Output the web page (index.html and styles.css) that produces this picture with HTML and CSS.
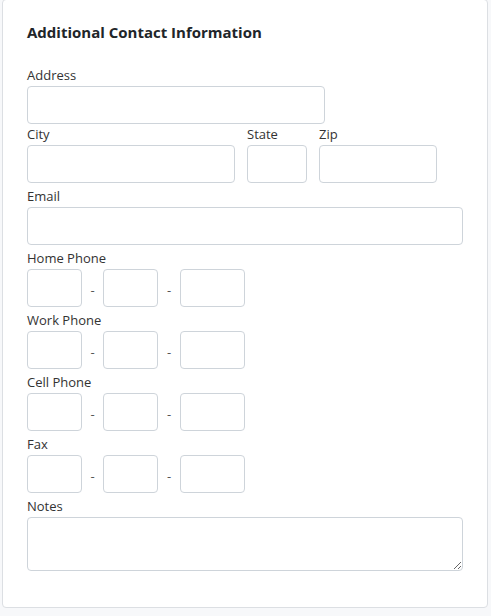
FILE: index.html
```html
<!DOCTYPE html>
<html lang="en">
<head>
<meta charset="utf-8">
<title>Additional Contact Information</title>
<link rel="stylesheet" href="styles.css">
</head>
<body>
<div class="card">
  <h2 class="card-title">Additional Contact Information</h2>
  <div class="group group-first">
    <label class="lbl">Address</label>
    <input class="field w-address" type="text">
  </div>
  <div class="row-csz">
    <div class="group">
      <label class="lbl">City</label>
      <input class="field" type="text">
    </div>
    <div class="group">
      <label class="lbl">State</label>
      <input class="field" type="text">
    </div>
    <div class="group">
      <label class="lbl">Zip</label>
      <input class="field" type="text">
    </div>
  </div>
  <div class="group">
    <label class="lbl">Email</label>
    <input class="field" type="text">
  </div>
  <div class="group">
    <label class="lbl">Home Phone</label>
    <div class="phone">
      <input class="field p3" type="text"><span class="dash">-</span><input class="field p3" type="text"><span class="dash dash-b">-</span><input class="field p4" type="text">
    </div>
  </div>
  <div class="group">
    <label class="lbl">Work Phone</label>
    <div class="phone">
      <input class="field p3" type="text"><span class="dash">-</span><input class="field p3" type="text"><span class="dash dash-b">-</span><input class="field p4" type="text">
    </div>
  </div>
  <div class="group">
    <label class="lbl">Cell Phone</label>
    <div class="phone">
      <input class="field p3" type="text"><span class="dash">-</span><input class="field p3" type="text"><span class="dash dash-b">-</span><input class="field p4" type="text">
    </div>
  </div>
  <div class="group">
    <label class="lbl">Fax</label>
    <div class="phone">
      <input class="field p3" type="text"><span class="dash">-</span><input class="field p3" type="text"><span class="dash dash-b">-</span><input class="field p4" type="text">
    </div>
  </div>
  <div class="group">
    <label class="lbl">Notes</label>
    <textarea class="field notes"></textarea>
  </div>
</div>
</body>
</html>
```
FILE: styles.css
```css
html, body {
  margin: 0;
  padding: 0;
  background: #f7f8fa;
}
body {
  font-family: "Open Sans", "Noto Sans", sans-serif;
  color: #333;
  height: 616px;
  overflow: hidden;
}
.card {
  box-sizing: border-box;
  margin: -1px 0 0 2px;
  width: 486px;
  background: #fff;
  border: 1px solid #dcdfe3;
  border-radius: 4px;
  padding: 22px 24px 36px 24px;
}
.card-title {
  margin: 0 0 23px 0;
  font-size: 15px;
  line-height: 20px;
  font-weight: 700;
  color: #212529;
}
.group {
  display: flex;
  flex-direction: column;
  margin-top: 3px;
}
.group-first {
  margin-top: 0;
}
.lbl {
  display: block;
  font-size: 13px;
  line-height: 21px;
  color: #333;
}
.field {
  box-sizing: border-box;
  height: 38px;
  border: 1px solid #ced4da;
  border-radius: 4px;
  background: #fff;
  margin: 0;
  padding: 6px 10px;
  font: inherit;
}
.w-address {
  width: 298px;
}
.row-csz {
  display: grid;
  grid-template-columns: 208px 60px 118px;
  column-gap: 12px;
  width: 436px;
}
.row-csz .group {
  margin-top: 0;
}
.phone {
  display: flex;
  align-items: center;
}
.p3 {
  width: 55px;
}
.p4 {
  width: 65px;
}
.dash {
  width: 21px;
  text-align: center;
  font-size: 13px;
  color: #555;
  padding-top: 4px;
}
.dash-b {
  width: 22px;
}
.notes {
  display: block;
  width: 436px;
  height: 54px;
  resize: vertical;
}
```
